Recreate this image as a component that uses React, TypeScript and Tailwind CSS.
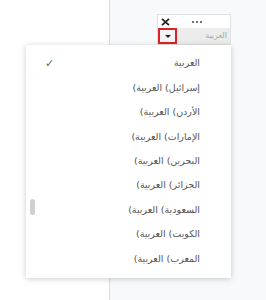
import React from 'react';

const regions = ['إسرائيل', 'الأردن', 'الإمارات', 'البحرين', 'الجزائر', 'السعودية', 'الكويت', 'المغرب', 'مصر'];

function MenuItem({ region, checked }: { region?: string; checked?: boolean }) {
  return (
    <div className="flex h-[24.4px] shrink-0 items-center justify-between pl-[19px] pr-[31px]">
      <span className="w-3 text-[11px] leading-none text-[#666]">{checked ? '✓' : ''}</span>
      {region ? (
        <span className="flex items-center text-[9.5px] leading-none text-[#555]">
          <span>(</span>
          <span>العربية</span>
          <span className="ml-[3px]">(</span>
          <span>{region}</span>
        </span>
      ) : (
        <span className="text-[9.5px] leading-none text-[#555]">العربية</span>
      )}
    </div>
  );
}

export default function App() {
  return (
    <div className="relative flex h-[300px] w-[266px] overflow-hidden font-['DejaVu_Sans',sans-serif]">
      <div className="w-[109px] bg-white" />
      <div className="w-px bg-[#dcdcdc]" />
      <div className="flex-1 bg-[#f8f9fb] pl-[47px] pt-[14px]">
        <div className="w-[74px] border border-[#e2e2e2] bg-white">
          <div className="flex h-[13px] items-center px-[3px]">
            <svg width="9" height="8" viewBox="0 0 9 8">
              <path d="M1 0.8 L8 7.2 M8 0.8 L1 7.2" stroke="#222" strokeWidth="1.8" />
            </svg>
            <span className="ml-[22px] flex gap-[2px]">
              <span className="h-[2px] w-[2px] rounded-full bg-[#444]" />
              <span className="h-[2px] w-[2px] rounded-full bg-[#444]" />
              <span className="h-[2px] w-[2px] rounded-full bg-[#444]" />
            </span>
          </div>
          <div className="flex h-[16px] items-center justify-between bg-[#ececec]">
            <div className="flex h-[16px] w-[19px] items-center justify-center border-2 border-[#d9232a] bg-[#f4f4f4]">
              <svg width="6" height="3" viewBox="0 0 6 3">
                <path d="M0 0 L6 0 L3 3 Z" fill="#222" />
              </svg>
            </div>
            <span className="pr-[3px] text-[8px] leading-none text-[#aaa]">العربية</span>
          </div>
        </div>
      </div>

      <div className="absolute left-[26px] top-[45px] flex h-[233px] w-[205px] flex-col overflow-hidden bg-white pt-[6px] shadow-[0_1px_6px_rgba(0,0,0,0.2)]">
        <MenuItem checked />
        {regions.map((r) => (
          <MenuItem key={r} region={r} />
        ))}
        <div className="absolute left-[4px] top-[154px] h-[16px] w-[5px] rounded-[3px] bg-[#d0d0d0]" />
      </div>
    </div>
  );
}
